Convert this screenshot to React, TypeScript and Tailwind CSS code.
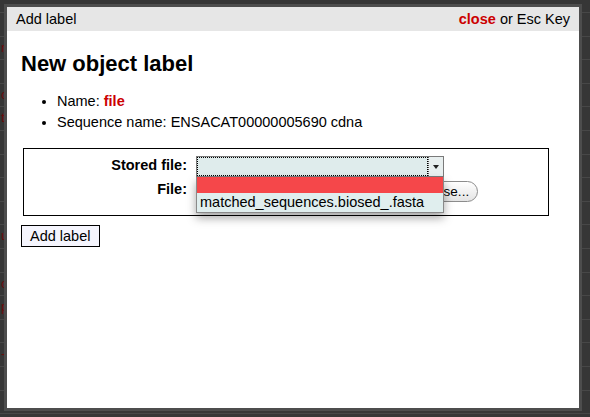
import React from 'react';

const rows = Array.from({ length: 18 });
const edgeLetters: Record<number, string> = { 1: 'n', 3: 'c', 4: 't', 9: 'u', 11: 'o', 12: 'p', 14: '-' };

const BackgroundPage = () => (
  <div className="flex flex-col pt-[12px]">
    {rows.map((_, i) => (
      <div
        key={i}
        className="h-[23.6px] border-t border-[#474747] text-[13px] leading-[22px] text-[#6e0b0b] pl-[1px] shrink-0"
      >
        {edgeLetters[i] ?? ''}
      </div>
    ))}
  </div>
);

const StoredFileSelect = () => (
  <div className="relative w-[248px] h-[21px]">
    <div className="flex h-full border border-[#7a7a7a] bg-[#dfecec]">
      <div className="flex-1 border border-dotted border-black" />
      <div className="w-[15px] flex items-center justify-center border-l border-dotted border-[#555] bg-[#e8efef]">
        <span className="block w-0 h-0 border-l-[3px] border-r-[3px] border-t-[4px] border-l-transparent border-r-transparent border-t-[#222]" />
      </div>
    </div>
    {/* open option list */}
    <div className="absolute left-0 top-[21px] z-10 w-[248px] border border-t-0 border-[#8a8a8a] bg-[#e0eeee] shadow-[0_5px_9px_rgba(0,0,0,0.35)]">
      <div className="h-[16px] bg-[#f5474a]" />
      <div className="h-[19px] pl-[3px] text-[14.5px] leading-[19px] text-black whitespace-nowrap">matched_sequences.biosed_.fasta</div>
    </div>
  </div>
);

const FileInput = () => (
  <div className="flex items-center mt-[1px]">
    <div className="w-[208px] h-[21px]" />
    <button className="h-[21px] w-[74px] rounded-full border border-[#8c8c8c] bg-gradient-to-b from-white to-[#e4e4e4] text-[13.5px] leading-[19px] text-black">
      Browse...
    </button>
  </div>
);

export default function App() {
  return (
    <div className="relative w-[590px] h-[417px] overflow-hidden bg-[#363636] font-['Liberation_Sans',Arial,sans-serif]">
      <BackgroundPage />

      {/* modal */}
      <div className="absolute left-[4px] top-[4px] w-[578px] h-[407px] border-[3px] border-[#4d4d4d] bg-white flex flex-col">
        <div className="h-[24px] bg-[#e6e6e6] flex items-center justify-between pl-[9px] pr-[9px] pt-[1px] text-[14.5px] text-black">
          <span>Add label</span>
          <span>
            <span className="font-bold text-[#cc0000]">close</span> or Esc Key
          </span>
        </div>

        <div className="pl-[14px] text-[14.5px] text-black">
          <h2 className="mt-[20px] text-[22px] leading-[26px] font-bold">New object label</h2>

          <ul className="mt-[14px] pl-[36px] list-disc leading-[21px]">
            <li>
              Name: <span className="font-bold text-[#cc0000]">file</span>
            </li>
            <li>Sequence name: ENSACAT00000005690 cdna</li>
          </ul>

          <div className="mt-[15px] ml-[2px] w-[526px] border border-black pt-[7px] pb-[13px]">
            <div className="flex items-start">
              <div className="w-[163px] text-right font-bold leading-[18px]">Stored file:</div>
              <div className="ml-[9px]">
                <StoredFileSelect />
              </div>
            </div>
            <div className="flex items-start mt-[3px]">
              <div className="w-[163px] text-right font-bold leading-[18px]">File:</div>
              <div className="ml-[9px]">
                <FileInput />
              </div>
            </div>
          </div>

          <button className="mt-[9px] h-[22px] w-[79px] border border-black bg-[#f5f5fd] leading-[20px] text-black text-left pl-[8px]">
            Add label
          </button>
        </div>
      </div>
    </div>
  );
}
